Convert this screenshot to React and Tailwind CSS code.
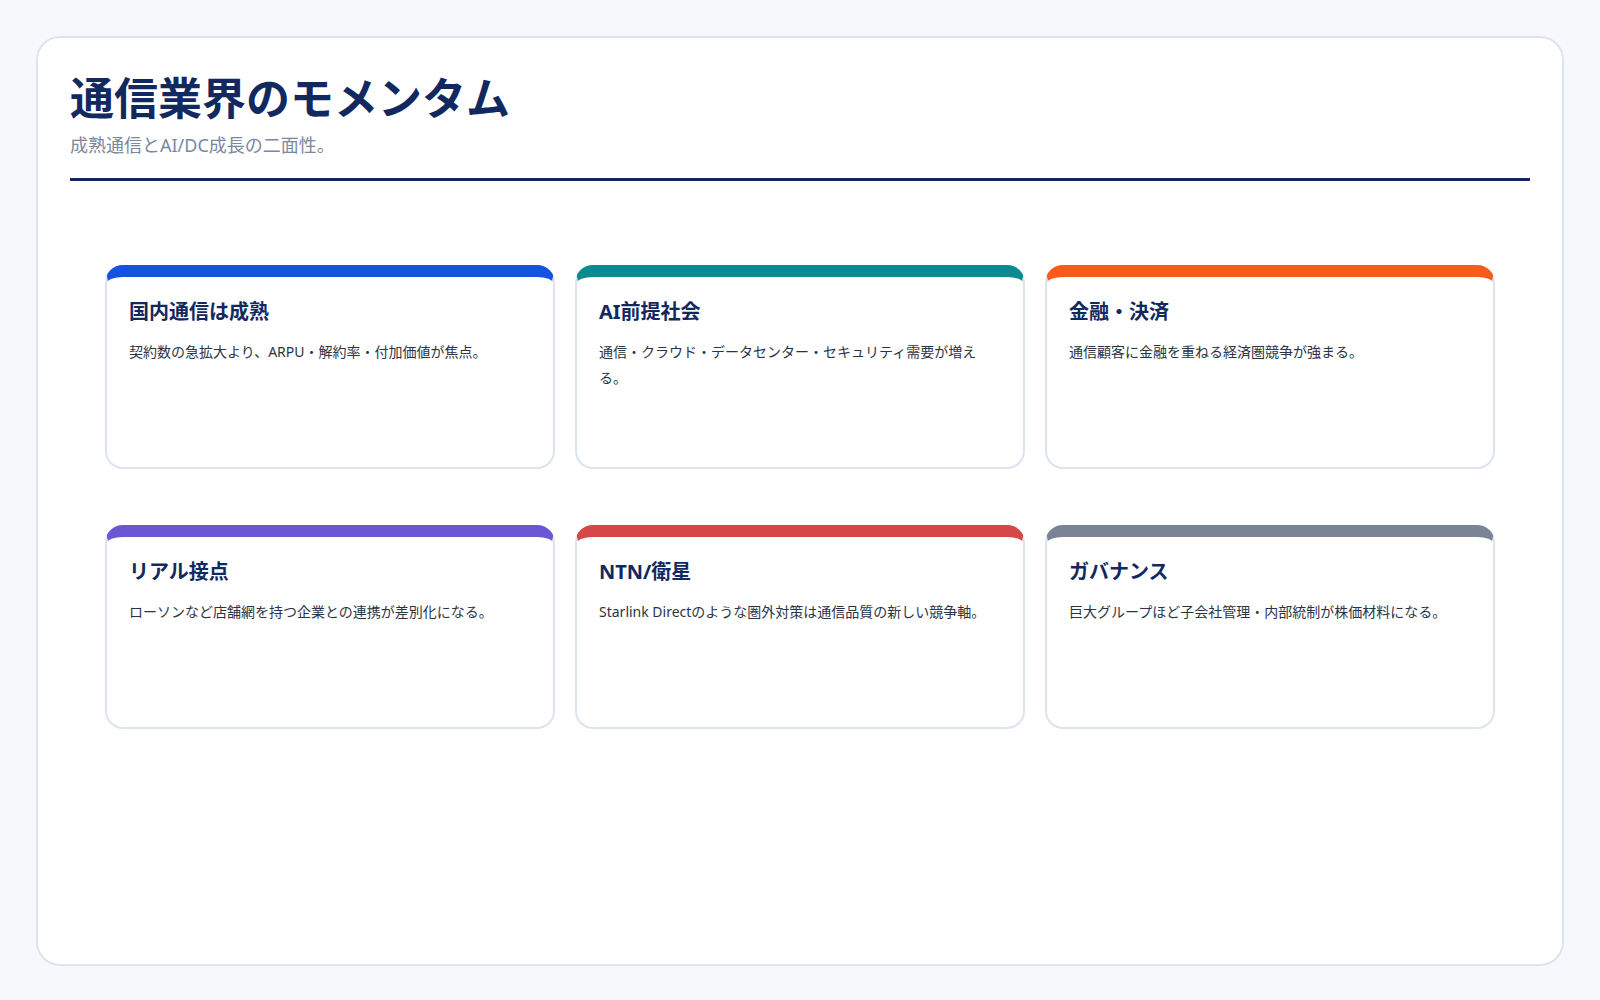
export default function App() {
  const cards = [
    ["国内通信は成熟", "契約数の急拡大より、ARPU・解約率・付加価値が焦点。", "border-t-[#1652e0]"],
    ["AI前提社会", "通信・クラウド・データセンター・セキュリティ需要が増える。", "border-t-[#0b8a8f]"],
    ["金融・決済", "通信顧客に金融を重ねる経済圏競争が強まる。", "border-t-[#fb5a1c]"],
    ["リアル接点", "ローソンなど店舗網を持つ企業との連携が差別化になる。", "border-t-[#6b57d4]"],
    ["NTN/衛星", "Starlink Directのような圏外対策は通信品質の新しい競争軸。", "border-t-[#d64747]"],
    ["ガバナンス", "巨大グループほど子会社管理・内部統制が株価材料になる。", "border-t-[#7a8496]"],
  ];
  return (
    <div className="min-h-screen bg-[#f6f8fb] p-[36px]" style={{ fontFamily: '"Noto Sans", "Noto Sans CJK JP", sans-serif' }}>
      <div className="h-[930px] rounded-[24px] border-2 border-[#dbe4f0] bg-white px-[32px] pt-[28px]">
        <h1 className="text-[44px] font-bold leading-[64px] text-[#12295f]">通信業界のモメンタム</h1>
        <p className="mt-[2px] text-[18px] leading-[26px] text-[#7a88a0]">成熟通信とAI/DC成長の二面性。</p>
        <div className="mt-[20px] h-[3px] bg-[#12295f]" />
        <div className="mt-[84px] grid grid-cols-3 gap-x-[20px] gap-y-[56px] px-[35px]">
          {cards.map(([t, d, c]) => (
            <div key={t} className={`h-[204px] rounded-[18px] border-2 border-t-[12px] border-[#dbe4f0] ${c} bg-white px-[22px] pt-[20px]`}>
              <h2 className="text-[20px] font-bold leading-[30px] text-[#12295f]">{t}</h2>
              <p className="mt-[12px] text-[14px] leading-[26px] text-[#2b3445]">{d}</p>
            </div>
          ))}
        </div>
      </div>
    </div>
  );
}
